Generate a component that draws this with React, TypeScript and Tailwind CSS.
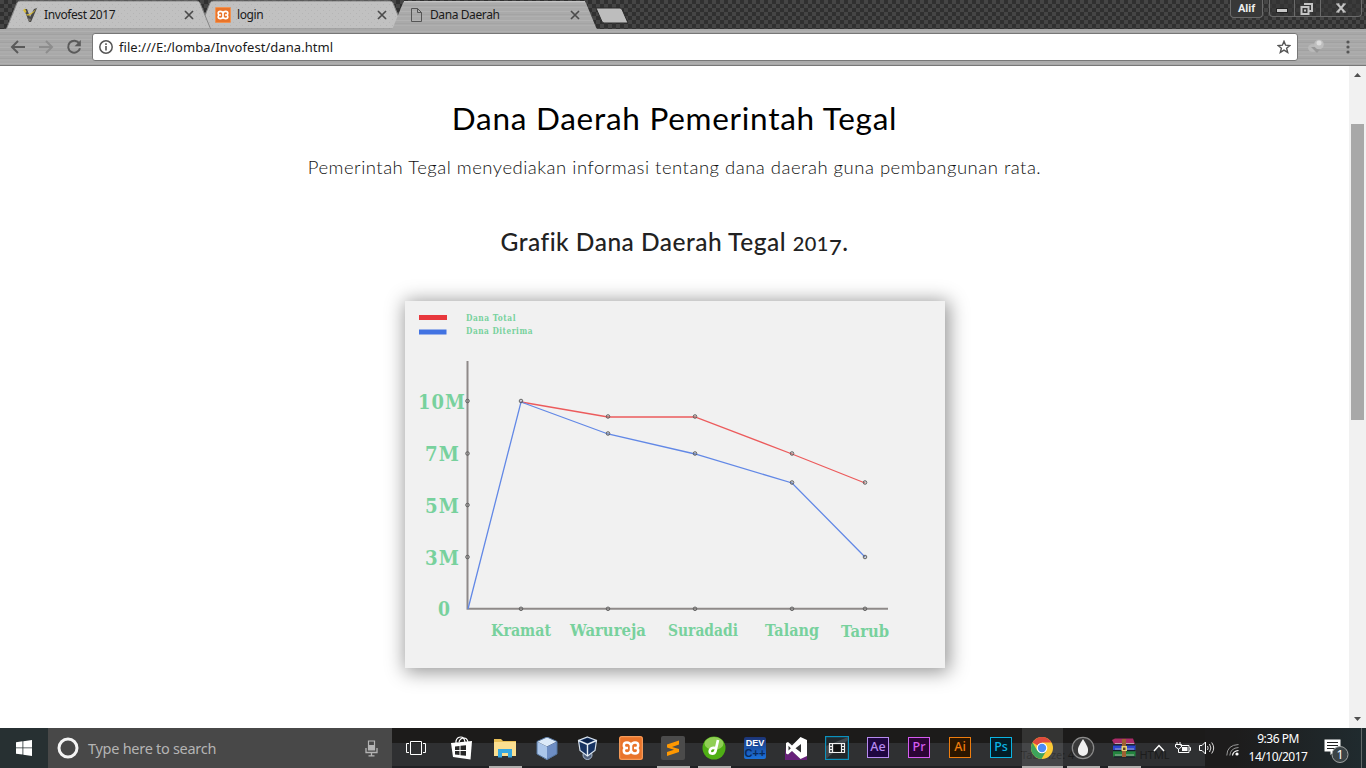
import type { ReactNode } from "react";

/* ---------- browser chrome ---------- */

function TabShape({ active }: { active?: boolean }) {
  return (
    <svg className="absolute inset-0" width="205" height="29" viewBox="0 0 205 29">
      <defs>
        <pattern id="dots" width="6" height="6" patternUnits="userSpaceOnUse">
          <rect width="6" height="6" fill="#c1c1c1" />
          <rect x="1" y="1" width="1" height="1" fill="#b5b5b5" />
          <rect x="4" y="4" width="1" height="1" fill="#b5b5b5" />
        </pattern>
        <pattern id="brushed" width="205" height="9" patternUnits="userSpaceOnUse">
          <rect width="205" height="9" fill="#aaaaaa" />
          <rect y="2" width="205" height="1" fill="#b3b3b3" />
          <rect y="5" width="205" height="1" fill="#a4a4a4" />
          <rect y="7" width="205" height="1" fill="#b0b0b0" />
        </pattern>
      </defs>
      <path
        d="M0 29 L1 27.5 L11 3 Q12 1 14 1 H191 Q193 1 194 3 L204 27.5 L205 29Z"
        fill={active ? "url(#brushed)" : "url(#dots)"}
        stroke={active ? "none" : "#858585"}
        strokeWidth="1"
      />
      {active && <path d="M12 1.5H193" stroke="#c4c4c4" />}
    </svg>
  );
}

function Tab({ icon, title, active, className }: { icon: ReactNode; title: string; active?: boolean; className: string }) {
  return (
    <div className={`relative h-[29px] w-[205px] shrink-0 ${className}`}>
      <TabShape active={active} />
      <div className="relative flex h-full items-center pl-[15px] pr-[17px] pt-[1px]">
        <span className="flex w-[18px] justify-center">{icon}</span>
        <span className="ml-[5px] flex-1 whitespace-nowrap text-[12px] leading-none tracking-[-0.4px] text-[#1a1a1a]">{title}</span>
        <svg width="10" height="10" viewBox="0 0 10 10">
          <path d="M1 1L9 9M9 1L1 9" stroke="#4b4b4b" strokeWidth="1.7" />
        </svg>
      </div>
    </div>
  );
}

const XamppMark = ({ size }: { size: number }) => (
  <svg width={size} height={size} viewBox="0 0 24 24">
    <rect width="24" height="24" rx="2.5" fill="#e9742a" />
    <rect x="0.7" y="0.7" width="22.6" height="22.6" rx="2" fill="none" stroke="#f7a466" strokeWidth="1" />
    <path
      d="M9 12H6.500Q4.800 11.500 4.800 9.200Q4.800 6.500 8 6.500Q11 6.500 12 9.200Q13 6.500 16 6.500Q19.200 6.500 19.200 9.200Q19.200 11.500 17.500 12H15M6.500 12Q4.800 12.500 4.800 14.800Q4.800 17.500 8 17.500Q11 17.500 12 14.800Q13 17.500 16 17.500Q19.200 17.500 19.200 14.800Q19.200 12.500 17.500 12M12 9V15"
      fill="none"
      stroke="#fff"
      strokeWidth="2.500"
      strokeLinejoin="round"
    />
  </svg>
);

const InvofestMark = () => (
  <svg width="16" height="16" viewBox="0 0 16 16">
    <path d="M2 2L5 2L8 10L12 2L15 1L9 15H7Z" fill="#484848" />
    <path d="M1 3L3 1.500L4.500 5L3 6ZM4 7C7 8 10 6 14 2L12 5C9 8 7 8.500 5 8.500Z" fill="#d9bd35" />
    <path d="M5 11L8 15L9 12" fill="#77736a" />
  </svg>
);

const PageMark = () => (
  <svg width="11" height="14" viewBox="0 0 11 14">
    <path d="M0.5 0.5H6.5L10.5 4.5V13.5H0.5ZM6.5 0.5V4.5H10.5" fill="none" stroke="#555" />
  </svg>
);

function TitleBar() {
  return (
    <div className="flex h-[29px] items-start bg-[repeating-conic-gradient(#303030_0_25%,#454545_0_50%)] bg-[length:8px_8px] pl-[6px]">
      <Tab className="z-20" icon={<InvofestMark />} title="Invofest 2017" />
      <Tab className="z-10 -ml-[12px]" icon={<XamppMark size={16} />} title="login" />
      <Tab className="z-30 -ml-[12px]" icon={<PageMark />} title="Dana Daerah" active />
      <svg className="-ml-[2px] mt-[7px]" width="34" height="17" viewBox="0 0 34 17">
        <path d="M1 1H25Q26.5 1 27.3 3L33 16H9Q7.500 16 6.700 14Z" fill="#bdbdbd" stroke="#2b2b2b" />
      </svg>
      <div className="ml-auto flex h-[18px] items-start">
        <div className="mr-[6px] flex h-[18px] w-[33px] items-center justify-center rounded-b-[4px] border border-t-0 border-[#6a6a6a] bg-[#383838] pt-[2px] font-['Roboto','Liberation_Sans',sans-serif] text-[11px] font-bold text-[#eee]">
          Alif
        </div>
        <div className="mr-[4px] flex h-[17px] w-[93px] rounded-b-[4px] border border-t-0 border-[#6a6a6a] bg-[#353535]/60">
          <span className="flex w-[25px] items-center justify-center border-r border-[#6a6a6a]">
            <svg width="12" height="6" viewBox="0 0 12 6" className="mt-[5px]">
              <rect x="0.5" y="0.5" width="11" height="4" fill="#c8c8c8" stroke="#222" />
            </svg>
          </span>
          <span className="flex w-[26px] items-center justify-center border-r border-[#6a6a6a]">
            <svg width="13" height="12" viewBox="0 0 13 12" className="-ml-[2px] mt-[1px]">
              <path d="M4 1H12V8H9M1.500 4H8.500V11H1.500Z" fill="none" stroke="#c4c4c4" strokeWidth="2" />
              <rect x="4" y="6.500" width="2" height="2" fill="#c4c4c4" />
            </svg>
          </span>
          <span className="flex flex-1 items-center justify-center">
            <svg width="10" height="10" viewBox="0 0 10 10">
              <path d="M1.500 1L8.500 9M8.500 1L1.500 9" stroke="#c4c4c4" strokeWidth="2" />
              <path d="M0 1H3.500M6.500 1H10M0 9H3.500M6.500 9H10" stroke="#c4c4c4" strokeWidth="1" />
            </svg>
          </span>
        </div>
      </div>
    </div>
  );
}

function Toolbar() {
  return (
    <div className="flex h-[37px] items-center border-b border-[#777] bg-[repeating-linear-gradient(180deg,#a9a9a9_0_2px,#b0b0b0_2px_3px,#a7a7a7_3px_5px,#a1a1a1_5px_6px,#acacac_6px_8px)] pl-[10px]">
      <svg width="16" height="16" viewBox="0 0 16 16" className="text-[#5a5a5a]">
        <path d="M15 8H2.500M8 2L2 8L8 14" fill="none" stroke="currentColor" strokeWidth="2" />
      </svg>
      <svg width="16" height="16" viewBox="0 0 16 16" className="ml-[12px] text-[#8d8d8d]">
        <path d="M1 8H13.500M8 2L14 8L8 14" fill="none" stroke="currentColor" strokeWidth="2" />
      </svg>
      <svg width="16" height="16" viewBox="0 0 16 16" className="ml-[12px] text-[#5a5a5a]">
        <path d="M13.300 4.500A6 6 0 1 0 14 9.200" fill="none" stroke="currentColor" strokeWidth="2" />
        <path d="M14.800 1V7.200H8.600Z" fill="currentColor" />
      </svg>
      <div className="ml-[10px] flex h-[28px] w-[1206px] items-center rounded-[3px] border border-[#777] bg-white pl-[6px] pr-[6px]">
        <svg width="14" height="14" viewBox="0 0 14 14">
          <circle cx="7" cy="7" r="6.200" fill="none" stroke="#555" strokeWidth="1.500" />
          <path d="M7 6V10.500M7 3.300V5" stroke="#555" strokeWidth="1.600" />
        </svg>
        <span className="ml-[6px] flex-1 text-[13px] leading-none tracking-[0.05px] text-[#1a1a1a]">file:///E:/lomba/Invofest/dana.html</span>
        <svg width="14" height="14" viewBox="0 0 14 14">
          <path d="M7 1.300L8.600 5.200L12.900 5.500L9.600 8.200L10.700 12.400L7 10.100L3.300 12.400L4.400 8.200L1.100 5.500L5.400 5.200Z" fill="none" stroke="#555" strokeWidth="1.400" />
        </svg>
      </div>
      <svg width="17" height="16" viewBox="0 0 17 16" className="ml-[10px]">
        <ellipse cx="5" cy="9" rx="5" ry="4" fill="#b9b9b9" />
        <path d="M3 8L9 8L13 9L9 14Z" fill="#979797" />
        <circle cx="11" cy="5.500" r="4.800" fill="#bebebe" />
        <circle cx="11" cy="4" r="2.500" fill="#dcdcdc" />
      </svg>
      <svg width="4" height="14" viewBox="0 0 4 14" className="ml-[21px]">
        <g fill="#555">
          <circle cx="2" cy="2" r="1.600" />
          <circle cx="2" cy="7" r="1.600" />
          <circle cx="2" cy="12" r="1.600" />
        </g>
      </svg>
    </div>
  );
}

/* ---------- page ---------- */

const total = [[521, 402], [608, 417], [695, 417], [792, 454], [865, 483]];
const received = [[468, 609], [521, 402], [608, 434], [695, 454], [792, 483], [865, 557]];
const markers = [
  [467.500, 401], [467.500, 453.500], [467.500, 505], [467.500, 557],
  [521, 401], [608, 416.500], [695, 416.500], [792, 453.500], [865, 482.500],
  [608, 433.500], [695, 453.500], [792, 482.500], [865, 557],
  [521, 608.800], [608, 608.800], [695, 608.800], [792, 608.800], [865, 608.800],
];
const legend: [string, number, number, number][] = [
  ["Dana Total", 466, 321, 50],
  ["Dana Diterima", 466, 334, 67],
];
const scale: [string, number, number, number][] = [
  ["10M", 418, 408.500, 48],
  ["7M", 425, 460.500, 35],
  ["5M", 425, 512.500, 35],
  ["3M", 425, 564.500, 35],
  ["0", 438, 616, 13],
];
const districts: [string, number, number, number][] = [
  ["Kramat", 491, 636, 60],
  ["Warureja", 570, 636, 76],
  ["Suradadi", 668, 636, 70],
  ["Talang", 765, 636, 54],
  ["Tarub", 841, 637, 48],
];

function Labels({ items, size, spacing }: { items: [string, number, number, number][]; size: number; spacing: string }) {
  return (
    <g fontSize={size} letterSpacing={spacing}>
      {items.map(([text, x, y, width]) => (
        <text key={text} x={x} y={y} textLength={width} lengthAdjust="spacingAndGlyphs">
          {text}
        </text>
      ))}
    </g>
  );
}

function Chart() {
  return (
    <svg
      width="540"
      height="367"
      viewBox="405 301 540 367"
      className="block bg-[#f1f1f1] shadow-[2px_2px_18px_2px_rgba(0,0,0,0.42)]"
    >
      <rect x="419" y="315" width="28" height="5" fill="#e8383d" />
      <rect x="419" y="329.500" width="27.500" height="5" fill="#4273e2" />
      <path d="M467.500 361V608.800H888" fill="none" stroke="#8f8a89" strokeWidth="2" />
      <polyline points={total.map((p) => p.join(",")).join(" ")} fill="none" stroke="#ec5b5c" strokeWidth="1.300" />
      <polyline points={received.map((p) => p.join(",")).join(" ")} fill="none" stroke="#6288e6" strokeWidth="1.300" />
      {markers.map(([x, y], i) => (
        <circle key={i} cx={x} cy={y} r="1.800" fill="#777" fillOpacity="0.25" stroke="#5a5a5a" strokeWidth="0.900" />
      ))}
      <g className="fill-[#78d19d] font-['DejaVu_Serif',serif] font-bold">
        <Labels items={legend} size={8.5} spacing="0.600" />
        <Labels items={scale} size={20} spacing="1.200" />
        <Labels items={districts} size={16.5} spacing="0" />
      </g>
    </svg>
  );
}

function Page() {
  return (
    <div className="flex min-h-0 flex-1 bg-white">
      <main className="flex flex-1 flex-col items-center font-['Lato',sans-serif]">
        <h1 className="mt-[32px] whitespace-nowrap text-[31.500px] font-normal leading-[40px] tracking-[0.73px] text-black">
          Dana Daerah Pemerintah Tegal
        </h1>
        <p className="mt-[16px] whitespace-nowrap text-[18.500px] font-light leading-[26px] tracking-[0.5px] text-[#111]">
          Pemerintah Tegal menyediakan informasi tentang dana daerah guna pembangunan rata.
        </p>
        <h2 className="mt-[45px] h-[34px] whitespace-nowrap text-[24.500px] font-medium leading-[34px] tracking-[0.49px] text-[#222]">
          Grafik Dana Daerah Tegal <span className="text-[20px]">201</span>
          <span className="relative top-[4px] text-[22px]">7</span>.
        </h2>
        <div className="mt-[42px]">
          <Chart />
        </div>
      </main>
      <div className="flex w-[17px] flex-col items-center bg-[#f1f1f1]">
        <svg className="mt-[7px]" width="7" height="4" viewBox="0 0 7 4">
          <path d="M0 4L3.500 0L7 4Z" fill="#505050" />
        </svg>
        <div className="mt-[47px] h-[296px] w-[13px] bg-[#a8a8a8]" />
        <svg className="mb-[7px] mt-auto" width="7" height="4" viewBox="0 0 7 4">
          <path d="M0 0L3.500 4L7 0Z" fill="#505050" />
        </svg>
      </div>
    </div>
  );
}

/* ---------- taskbar ---------- */

function TaskIcon({ children, w = "w-[41px]", open, active }: { children: ReactNode; w?: string; open?: boolean; active?: boolean }) {
  return (
    <div className={`flex h-full shrink-0 flex-col items-center ${w} ${active ? "bg-[#ffffff1c]" : ""}`}>
      <span className="flex h-[38px] items-center pt-[2px]">{children}</span>
      {open && <span className={`h-[2px] bg-[#b0afad] ${active ? "w-full" : "w-[33px]"}`} />}
    </div>
  );
}

function Adobe({ text, tone }: { text: string; tone: string }) {
  return (
    <span className={`mb-[2px] flex h-[21px] w-[22px] items-center justify-center border-[1.500px] text-[12.500px] font-medium leading-none ${tone}`}>
      {text}
    </span>
  );
}

function Taskbar() {
  return (
    <div className="relative isolate flex h-[40px] bg-[linear-gradient(180deg,#1c1b1a_0_15.500px,#2f3032_15.500px_38px,#202124_38px)] text-white">
      {/* editor status line showing dimly through the translucent bar */}
      <span className="absolute left-[1021px] top-[20px] -z-10 flex gap-[65px] whitespace-pre text-[11px] leading-[14px] text-[#1c1c1c]">
        <span>Tab Size: 4</span>
        <span>HTML</span>
      </span>
      <div className="flex w-[48px] items-center justify-center bg-[#273032]">
        <svg width="16" height="16" viewBox="0 0 16 16">
          <path d="M0 2.200L6.500 1.300V7.500H0ZM7.300 1.200L16 0V7.500H7.300ZM0 8.300H6.500V14.600L0 13.700ZM7.300 8.300H16V16L7.300 14.800Z" fill="#fff" />
        </svg>
      </div>
      <div className="flex w-[344px] items-center bg-[#484848] pl-[9px] pr-[14px]">
        <svg width="22" height="22" viewBox="0 0 22 22">
          <circle cx="11" cy="11" r="9" fill="none" stroke="#f4f4f4" strokeWidth="3" />
        </svg>
        <span className="ml-[9px] flex-1 text-[14.500px] leading-none tracking-[-0.28px] text-[#b4b4b4]">Type here to search</span>
        <svg width="13" height="17" viewBox="0 0 13 17">
          <path d="M3.500 1H9.500V10H3.500Z" fill="none" stroke="#b4b4b4" strokeWidth="1.200" />
          <path d="M4 5H9V10H4Z" fill="#b4b4b4" />
          <path d="M1 8V12.500H12V8M6.500 13V15.500M3.500 15.800H9.500" fill="none" stroke="#b4b4b4" strokeWidth="1.300" />
        </svg>
      </div>
      <TaskIcon w="w-[48px]">
        <svg width="20" height="14" viewBox="0 0 20 14">
          <path d="M4.500 0.500H15.500V13.500H4.500ZM3 2.500H0.500V11.500H3M17 2.500H19.500V11.500H17" fill="none" stroke="#fff" />
        </svg>
      </TaskIcon>
      <TaskIcon w="w-[44px]">
        <svg width="22" height="24" viewBox="0 0 22 24">
          <path d="M5 7V5Q6 1 10 1Q13 1 14 6M8 6Q9 2 13 2Q16 2 17 6" fill="none" stroke="#fff" strokeWidth="1.200" />
          <path d="M0 7L21 5L19.500 23.500L2 21Z" fill="#fff" />
          <path d="M4 10.500L8.500 10V14H4ZM9.500 9.800L15 9.200V14H9.500ZM4 15H8.500V19L4 18.500ZM9.500 15H15V19.800L9.500 19.200Z" fill="#272727" />
        </svg>
      </TaskIcon>
      <TaskIcon w="w-[42px]" open>
        <svg width="22" height="20" viewBox="0 0 22 20">
          <path d="M0 1H7L9 3H22V18H0Z" fill="#e8bf57" />
          <path d="M0 4H22V18H0Z" fill="#fbdf90" />
          <path d="M4 11H18V19.500H14V15H8V19.500H4Z" fill="#36a8e0" />
        </svg>
      </TaskIcon>
      <TaskIcon>
        <svg width="22" height="23" viewBox="0 0 22 23">
          <path d="M11 0L21 4.500L11 9.500L1 4.500Z" fill="#dbe9f8" />
          <path d="M1 4.500L11 9.500V23L1 17Z" fill="#abc6ea" />
          <path d="M21 4.500L11 9.500V23L21 17Z" fill="#6d8dc3" />
          <path d="M11 0L21 4.500V17L11 22.500L1 17V4.500Z" fill="none" stroke="#54749e" />
        </svg>
      </TaskIcon>
      <TaskIcon>
        <svg width="21" height="24" viewBox="0 0 21 24">
          <circle cx="10.500" cy="19" r="4.500" fill="#51617c" stroke="#aabbd0" />
          <path d="M10.500 1L19.500 4.500L18 14.500L10.500 20L3 14.500L1.500 4.500Z" fill="#173362" stroke="#d8e3ef" strokeWidth="1.200" />
          <path d="M1.500 4.500L10.500 8.500L19.500 4.500M10.500 8.500V20" fill="none" stroke="#e7eff6" strokeWidth="1.400" />
          <path d="M5 4.400L10.500 2.500L16 4.400L10.500 6.700Z" fill="#0a2148" />
        </svg>
      </TaskIcon>
      <TaskIcon w="w-[45px]">
        <XamppMark size={24} />
      </TaskIcon>
      <TaskIcon w="w-[40.500px]" open>
        <svg width="24" height="24" viewBox="0 0 24 24">
          <rect width="24" height="24" rx="2" fill="#4b4b4b" />
          <path d="M6 8.500L18 4.500V8.500L11 11L18 13V16L6 20V16L13 13.700L6 11.500Z" fill="#ff9800" />
        </svg>
      </TaskIcon>
      <TaskIcon open>
        <svg width="24" height="24" viewBox="0 0 24 24">
          <circle cx="12" cy="12" r="11.500" fill="#4fae15" />
          <ellipse cx="12" cy="7.500" rx="9.500" ry="6.500" fill="#90cf55" />
          <path d="M16 4L13.500 15Q12.500 18 9.500 17.500Q7 17 8 14Q9.500 11 13.500 12" fill="none" stroke="#fff" strokeWidth="2.700" />
        </svg>
      </TaskIcon>
      <TaskIcon>
        <span className="flex h-[22px] w-[22px] flex-col items-center rounded-[2px] bg-[linear-gradient(#1c3476,#1b72db)] font-['Liberation_Sans',sans-serif] text-[9px] font-bold leading-[12px]">
          <span className="text-white">DEV</span>
          <span className="text-[11px] leading-[9px] text-[#082a5c]">C++</span>
        </span>
      </TaskIcon>
      <TaskIcon>
        <svg width="22" height="23" viewBox="0 0 22 23">
          <path d="M0 10V23H22V16L15.500 22L7 14L3 17.500L1 16.500Z" fill="#68217a" />
          <path d="M15.500 0L22 3V19L15.500 22L7 14L3 17.500L1 16.500V6L3 5L7 8.500ZM16 7L10.500 11.300L16 15.500ZM3.500 8.800V13.600L5.800 11.200Z" fill="#fff" fillRule="evenodd" />
        </svg>
      </TaskIcon>
      <TaskIcon>
        <svg width="24" height="24" viewBox="0 0 24 24">
          <rect x="0.600" y="0.600" width="22.800" height="22.800" fill="#21272b" stroke="#0b91bd" strokeWidth="1.200" />
          <path d="M1 23V10L23 1V4Z" fill="#41484d" />
          <path d="M4 7.500H20M4 16.500H20M7.500 7V17M16.500 7V17M4.500 7V17M19.500 7V17M4.500 10.500H7.500M4.500 13.500H7.500M16.500 10.500H19.500M16.500 13.500H19.500" stroke="#eee" strokeWidth="1.200" />
          <path d="M8.500 8.500H15.500V15.500H8.500Z" fill="#111" />
        </svg>
      </TaskIcon>
      <TaskIcon><Adobe text="Ae" tone="border-[#b78af0] bg-[#1f0640] text-[#b78af0]" /></TaskIcon>
      <TaskIcon><Adobe text="Pr" tone="border-[#d55bf0] bg-[#2b0535] text-[#d55bf0]" /></TaskIcon>
      <TaskIcon><Adobe text="Ai" tone="border-[#ee7d0e] bg-[#2b1600] text-[#ee7d0e]" /></TaskIcon>
      <TaskIcon><Adobe text="Ps" tone="border-[#0bb4e3] bg-[#031d27] text-[#0bb4e3]" /></TaskIcon>
      <TaskIcon open active>
        <svg width="22" height="22" viewBox="0 0 22 22">
          <circle cx="11" cy="11" r="11" fill="#fbc935" />
          <path d="M11 11L1.500 5.500A11 11 0 0 1 20.500 5.500H11Z" fill="#df4a3d" />
          <path d="M1.500 5.500A11 11 0 0 0 10.500 22L15.500 13.500L11 11L6.300 13.700Z" fill="#3da35b" />
          <circle cx="11" cy="11" r="5.300" fill="#fff" />
          <circle cx="11" cy="11" r="4.200" fill="#4c8bf5" />
        </svg>
      </TaskIcon>
      <TaskIcon open>
        <svg width="24" height="24" viewBox="0 0 24 24">
          <circle cx="12" cy="12" r="10.700" fill="#393939" stroke="#8c8c8c" strokeWidth="1.200" />
          <path d="M12 3Q18 12 17 15A5 5 0 0 1 7 15Q6 12 12 3Z" fill="#f1f1f1" />
        </svg>
      </TaskIcon>
      <TaskIcon open>
        <svg width="24" height="20" viewBox="0 0 24 20">
          <path d="M0 2L3 0.500H21L23 6H2Z" fill="#ac2b68" />
          <path d="M1 7H23.500V12H1Z" fill="#2d46cf" />
          <path d="M1 13H23.500V18.500H1Z" fill="#23843e" />
          <path d="M1 7H23M1 12.700H23M2 19H23" stroke="#171b2b" strokeWidth="1.200" />
          <path d="M3 5.500H22M3 11H22M3 17H22" stroke="#c1bcc2" strokeWidth="0.800" />
          <path d="M10 1H14V19H10Z" fill="#9f6133" />
          <path d="M9.500 8H15V13H9.500Z" fill="#e9d174" />
          <path d="M11 9.500H13.500V12H11Z" fill="#604222" />
        </svg>
      </TaskIcon>
      <div className="flex flex-1 items-center bg-[linear-gradient(90deg,#ffffff00_0_60px,#1d1c1c_60px_90px,#202b2f)] pl-[8.500px]">
        <svg width="12" height="8" viewBox="0 0 12 8">
          <path d="M1 7L6 1.500L11 7" fill="none" stroke="#fff" strokeWidth="1.400" />
        </svg>
        <svg width="16" height="13" viewBox="0 0 16 13" className="ml-[10px]">
          <path d="M5.500 3.500H14V10.500H5.500M14.500 5.500H15.500V8.500H14.500" fill="none" stroke="#fff" />
          <path d="M7 5H12.500V9H7Z" fill="#fff" />
          <path d="M2 0V3M5 0V3M0.500 2.500H6.500V5L3.500 7L0.500 5ZM3.500 7V10.500H6" fill="none" stroke="#fff" />
        </svg>
        <svg width="16" height="14" viewBox="0 0 16 14" className="ml-[8px]">
          <path d="M0.500 4.500H3L6.500 1V13L3 9.500H0.500Z" fill="none" stroke="#fff" />
          <path d="M8.500 5Q9.800 7 8.500 9M10.500 3Q13.300 7 10.500 11M12.700 1.500Q16.700 7 12.700 12.500" fill="none" stroke="#ddd" />
        </svg>
        <svg width="13" height="13" viewBox="0 0 13 13" className="ml-[11px] mt-[3px]">
          <path d="M0.800 12.500Q1 2 12.500 1.500M3.800 12.500Q4.500 5 12.500 4.500" fill="none" stroke="#999" />
          <path d="M6.500 12.500Q7 8 12.500 7.500" fill="none" stroke="#fff" strokeWidth="1.200" />
          <circle cx="11" cy="11" r="1.600" fill="#fff" />
        </svg>
        <div className="ml-[7px] flex w-[64px] flex-col items-center whitespace-nowrap text-[12px] leading-[18px] tracking-[-0.5px]">
          <span>9:36 PM</span>
          <span>14/10/2017</span>
        </div>
        <svg width="26" height="25" viewBox="0 0 26 25" className="ml-[14px] mt-[7px]">
          <path d="M0.500 0.500H16.500V12.500H10L6.500 16V12.500H0.500Z" fill="#fff" />
          <path d="M3 3.500H14M3 6.500H14M3 9.500H11" stroke="#222" />
          <circle cx="16" cy="15.500" r="8" fill="#3b4346" stroke="#a0a3a3" />
          <text x="12.600" y="20" fontSize="12.500" fill="#fff">1</text>
        </svg>
        <span className="ml-[11px] h-full w-px bg-[#626969]" />
      </div>
    </div>
  );
}

export default function App() {
  return (
    <div className="flex h-[768px] w-[1366px] flex-col overflow-hidden font-['Noto_Sans','Open_Sans',sans-serif]">
      <TitleBar />
      <Toolbar />
      <Page />
      <Taskbar />
    </div>
  );
}
